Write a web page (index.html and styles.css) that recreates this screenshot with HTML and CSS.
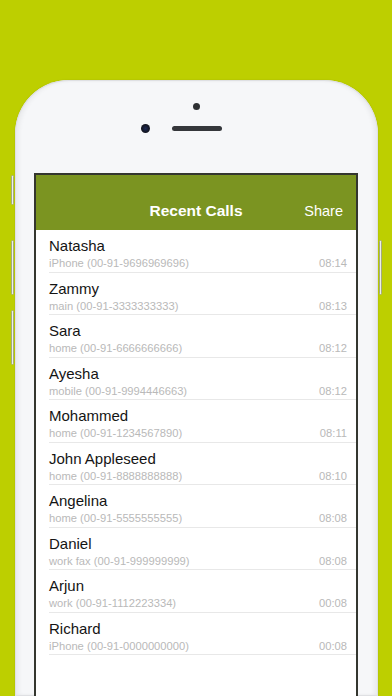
FILE: index.html
```html
<!DOCTYPE html>
<html>
<head>
<meta charset="utf-8">
<link rel="stylesheet" href="styles.css">
</head>
<body>
<div class="stage">
  <div class="phone">
    <span class="btn btn-mute"></span>
    <span class="btn btn-volup"></span>
    <span class="btn btn-voldown"></span>
    <span class="btn btn-power"></span>
    <div class="sensors">
      <div class="dot"></div>
      <div class="sensor-row">
        <div class="camera"></div>
        <div class="speaker"></div>
        <div class="spacer"></div>
      </div>
    </div>
    <div class="screen">
      <div class="navbar">
        <div class="nav-side"></div>
        <div class="nav-title">Recent Calls</div>
        <div class="nav-side nav-action">Share</div>
      </div>
      <ul class="calls">
        <li class="call"><div class="name">Natasha</div><div class="meta"><span>iPhone (00-91-9696969696)</span><span>08:14</span></div></li>
        <li class="call"><div class="name">Zammy</div><div class="meta"><span>main (00-91-3333333333)</span><span>08:13</span></div></li>
        <li class="call"><div class="name">Sara</div><div class="meta"><span>home (00-91-6666666666)</span><span>08:12</span></div></li>
        <li class="call"><div class="name">Ayesha</div><div class="meta"><span>mobile (00-91-9994446663)</span><span>08:12</span></div></li>
        <li class="call"><div class="name">Mohammed</div><div class="meta"><span>home (00-91-1234567890)</span><span>08:11</span></div></li>
        <li class="call"><div class="name">John Appleseed</div><div class="meta"><span>home (00-91-8888888888)</span><span>08:10</span></div></li>
        <li class="call"><div class="name">Angelina</div><div class="meta"><span>home (00-91-5555555555)</span><span>08:08</span></div></li>
        <li class="call"><div class="name">Daniel</div><div class="meta"><span>work fax (00-91-999999999)</span><span>08:08</span></div></li>
        <li class="call"><div class="name">Arjun</div><div class="meta"><span>work (00-91-1112223334)</span><span>00:08</span></div></li>
        <li class="call"><div class="name">Richard</div><div class="meta"><span>iPhone (00-91-0000000000)</span><span>00:08</span></div></li>
      </ul>
    </div>
  </div>
</div>
</body>
</html>
```
FILE: styles.css
```css
* { box-sizing: border-box; }
html, body {
  margin: 0;
  padding: 0;
  width: 392px;
  height: 696px;
  overflow: hidden;
  background: #bdcf00;
  font-family: "Liberation Sans", Arial, sans-serif;
}
.stage {
  padding-top: 80px;
  padding-left: 15px;
}
.phone {
  position: relative;
  width: 363px;
  height: 616px;
  background: #f6f7f9;
  border-radius: 54px 54px 0 0;
  box-shadow: inset 0 0 0 1px #dfe0e3, inset 4px 0 4px rgba(0,0,0,0.05), inset -4px 0 4px rgba(0,0,0,0.05), 0 0 2px rgba(0,0,0,0.12);
  padding-top: 23px;
}
.btn {
  position: absolute;
  width: 3px;
  background: #eef0e6;
  border: 1px solid #a4aa80;
  border-radius: 2px;
}
.btn-mute { left: -4px; top: 95px; height: 30px; }
.btn-volup { left: -4px; top: 160px; height: 55px; }
.btn-voldown { left: -4px; top: 230px; height: 55px; }
.btn-power { right: -4px; top: 160px; height: 55px; }
.sensors {
  display: flex;
  flex-direction: column;
  align-items: center;
  height: 70px;
}
.dot {
  width: 7px;
  height: 7px;
  border-radius: 50%;
  background: #2e3033;
}
.sensor-row {
  display: flex;
  align-items: center;
  gap: 22px;
  margin-top: 14px;
}
.camera {
  width: 9px;
  height: 9px;
  border-radius: 50%;
  background: radial-gradient(circle at 50% 50%, #1d2a55 0, #121522 60%, #2b2d33 100%);
}
.speaker {
  width: 50px;
  height: 5px;
  border-radius: 3px;
  background: #35373b;
}
.spacer { width: 9px; height: 9px; }
.screen {
  margin-left: 19px;
  width: 324px;
  height: 523px;
  border: 2px solid #34362f;
  border-bottom: none;
  background: #ffffff;
  overflow: hidden;
}
.navbar {
  height: 55px;
  background: #7b9421;
  display: flex;
  align-items: flex-end;
  justify-content: space-between;
  padding: 0 13px 11px 13px;
  color: #ffffff;
}
.nav-side { width: 60px; font-size: 14.5px; line-height: 16px; }
.nav-action { text-align: right; }
.nav-title {
  font-size: 15.5px;
  font-weight: bold;
  line-height: 16px;
}
.calls {
  list-style: none;
  margin: 0;
  padding: 0;
}
.call {
  margin-left: 13px;
  padding: 7px 9px 0 0;
  height: 42.5px;
  border-bottom: 1px solid #e8e8e8;
}
.name {
  font-size: 15px;
  line-height: 18px;
  color: #141414;
}
.meta {
  margin-top: 2px;
  display: flex;
  justify-content: space-between;
  font-size: 11.2px;
  line-height: 13px;
  color: #b9b9b9;
}
```
